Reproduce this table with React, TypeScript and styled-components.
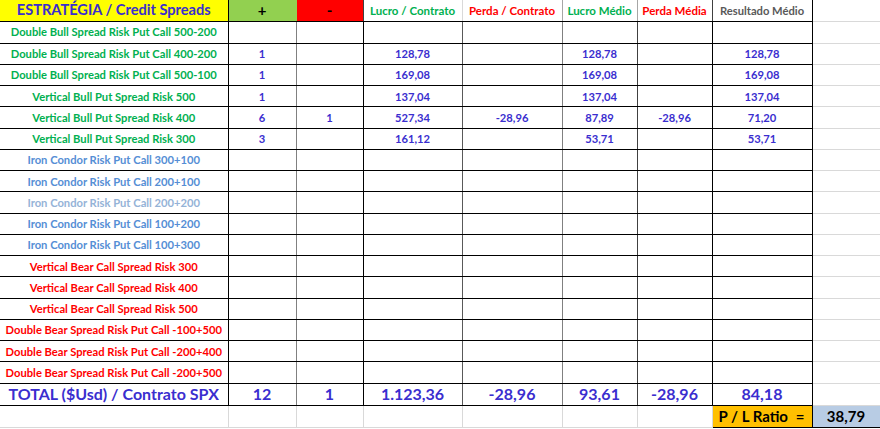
import React from "react";
import styled, { createGlobalStyle } from "styled-components";

const GlobalStyle = createGlobalStyle`
  html, body { margin: 0; padding: 0; background: #ffffff; }
  body { font-family: Lato, "Liberation Sans", sans-serif; }
`;

const C = {
  blue: "#3a2ecf",
  green: "#00b050",
  red: "#ff0000",
  condor: "#558ed5",
  condorLight: "#95b3d7",
  gray: "#595959",
  grid: "#d9d9d9",
};

const Sheet = styled.table`
  border-collapse: collapse;
  table-layout: fixed;
  width: 880px;
  font-weight: 700;
`;

const Row = styled.tr<{ $h: number }>`
  height: ${(p) => p.$h}px;
`;

const Cell = styled.td<{
  $c?: string;
  $bg?: string;
  $fs?: number;
  $rb?: string;
  $bb?: string;
}>`
  padding: 0;
  text-align: center;
  vertical-align: middle;
  white-space: nowrap;
  overflow: hidden;
  font-weight: 700;
  line-height: 1;
  color: ${(p) => p.$c || C.blue};
  background: ${(p) => p.$bg || "transparent"};
  font-size: ${(p) => p.$fs || 11}px;
  border-right: 1px solid ${(p) => p.$rb || "#000"};
  border-bottom: 1px solid ${(p) => p.$bb || "#000"};
`;

const RatioCell = styled.td`
  padding: 0 7px 0 6px;
  background: #ffc000;
  border: 1px solid #000;
  font-size: 15px;
  font-weight: 700;
  color: #000;
  white-space: nowrap;
  overflow: hidden;
`;

const RatioInner = styled.div`
  display: flex;
  justify-content: space-between;
  align-items: center;
`;

const ValueCell = styled.td`
  padding: 0;
  background: #b8cce4;
  border: 1px solid #000;
  font-size: 15px;
  font-weight: 700;
  color: #000;
  text-align: center;
`;

const widths = [228, 68, 67, 99, 100, 75, 75, 100, 68];
const vLines = ["#000", "#808080", "#000", "#595959", "#808080", "#404040", "#000", "#000", C.grid];
const headVLines = ["#000", "#92d050", "#404040", C.grid, "#a6a6a6", "#a6a6a6", "#404040", "#000", C.grid];

type R = { label: string; color: string; v: string[] };

const rows: R[] = [
  { label: "Double Bull Spread Risk Put Call 500-200", color: C.green, v: ["", "", "", "", "", "", ""] },
  { label: "Double Bull Spread Risk Put Call 400-200", color: C.green, v: ["1", "", "128,78", "", "128,78", "", "128,78"] },
  { label: "Double Bull Spread Risk Put Call 500-100", color: C.green, v: ["1", "", "169,08", "", "169,08", "", "169,08"] },
  { label: "Vertical Bull Put Spread Risk 500", color: C.green, v: ["1", "", "137,04", "", "137,04", "", "137,04"] },
  { label: "Vertical Bull Put Spread Risk 400", color: C.green, v: ["6", "1", "527,34", "-28,96", "87,89", "-28,96", "71,20"] },
  { label: "Vertical Bull Put Spread Risk 300", color: C.green, v: ["3", "", "161,12", "", "53,71", "", "53,71"] },
  { label: "Iron Condor Risk Put Call 300+100", color: C.condor, v: ["", "", "", "", "", "", ""] },
  { label: "Iron Condor Risk Put Call 200+100", color: C.condor, v: ["", "", "", "", "", "", ""] },
  { label: "Iron Condor Risk Put Call 200+200", color: C.condorLight, v: ["", "", "", "", "", "", ""] },
  { label: "Iron Condor Risk Put Call 100+200", color: C.condor, v: ["", "", "", "", "", "", ""] },
  { label: "Iron Condor Risk Put Call 100+300", color: C.condor, v: ["", "", "", "", "", "", ""] },
  { label: "Vertical Bear Call Spread Risk 300", color: C.red, v: ["", "", "", "", "", "", ""] },
  { label: "Vertical Bear Call Spread Risk 400", color: C.red, v: ["", "", "", "", "", "", ""] },
  { label: "Vertical Bear Call Spread Risk 500", color: C.red, v: ["", "", "", "", "", "", ""] },
  { label: "Double Bear Spread Risk Put Call -100+500", color: C.red, v: ["", "", "", "", "", "", ""] },
  { label: "Double Bear Spread Risk Put Call -200+400", color: C.red, v: ["", "", "", "", "", "", ""] },
  { label: "Double Bear Spread Risk Put Call -200+500", color: C.red, v: ["", "", "", "", "", "", ""] },
];

const headers: { t: string; c: string; bg?: string; fs: number }[] = [
  { t: "ESTRATÉGIA / Credit Spreads", c: C.blue, bg: "#ffff00", fs: 14.6 },
  { t: "+", c: "#000", bg: "#92d050", fs: 15 },
  { t: "-", c: "#000", bg: "#ff0000", fs: 15 },
  { t: "Lucro / Contrato", c: C.green, fs: 11.5 },
  { t: "Perda / Contrato", c: C.red, fs: 11.5 },
  { t: "Lucro Médio", c: C.green, fs: 11.5 },
  { t: "Perda Média", c: C.red, fs: 11.5 },
  { t: "Resultado Médio", c: C.gray, fs: 11.2 },
];

const total = ["12", "1", "1.123,36", "-28,96", "93,61", "-28,96", "84,18"];

export default function App() {
  return (
    <>
      <GlobalStyle />
      <Sheet>
        <colgroup>
          {widths.map((w, i) => (
            <col key={i} style={{ width: w }} />
          ))}
        </colgroup>
        <tbody>
          <Row $h={21}>
            {headers.map((h, i) => (
              <Cell key={i} $c={h.c} $bg={h.bg} $fs={h.fs} $rb={headVLines[i]}>
                {h.t}
              </Cell>
            ))}
            <Cell $rb={C.grid} $bb={C.grid} />
          </Row>
          {rows.map((r, ri) => (
            <Row key={ri} $h={ri === 0 ? 22 : 21.25}>
              <Cell $c={r.color} $fs={11.2} $rb={vLines[0]}>
                {r.label}
              </Cell>
              {r.v.map((v, i) => (
                <Cell key={i} $fs={11.2} $rb={vLines[i + 1]}>
                  {v}
                </Cell>
              ))}
              <Cell $rb={C.grid} $bb={C.grid} />
            </Row>
          ))}
          <Row $h={22}>
            <Cell $fs={16} $rb={vLines[0]}>
              TOTAL ($Usd) / Contrato SPX
            </Cell>
            {total.map((v, i) => (
              <Cell key={i} $fs={16} $rb={vLines[i + 1]}>
                {v}
              </Cell>
            ))}
            <Cell $rb={C.grid} $bb={C.grid} />
          </Row>
          <Row $h={22}>
            {widths.slice(0, 7).map((_, i) => (
              <Cell key={i} $rb={C.grid} $bb={C.grid} />
            ))}
            <RatioCell>
              <RatioInner>
                <span>P / L Ratio</span>
                <span>=</span>
              </RatioInner>
            </RatioCell>
            <ValueCell>38,79</ValueCell>
          </Row>
        </tbody>
      </Sheet>
    </>
  );
}
